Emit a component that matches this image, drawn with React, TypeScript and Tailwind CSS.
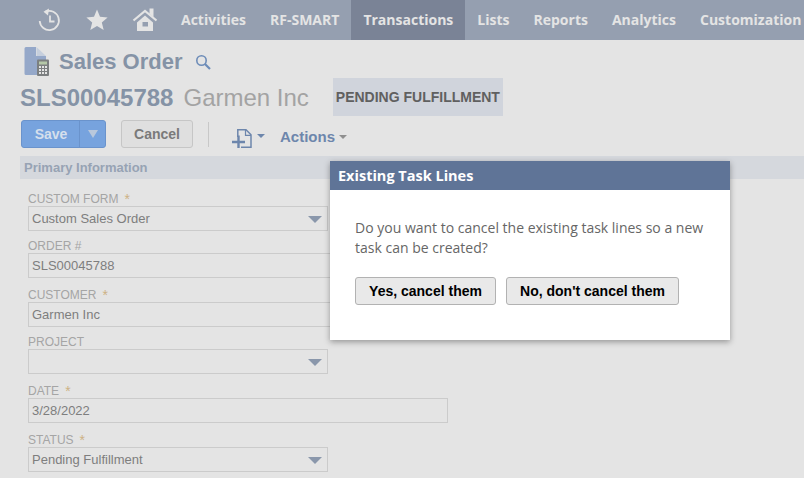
const sans = "font-['Liberation_Sans',Arial,sans-serif]";

const navItems = ['Activities', 'RF-SMART', 'Transactions', 'Lists', 'Reports', 'Analytics', 'Customization'];

const HistoryIcon = () => (
  <svg width="24" height="24" viewBox="0 0 24 24" fill="none" stroke="#e4e4e4" strokeWidth="1.800" className="shrink-0">
    <path d="M8.500 3.600A9.600 9.600 0 1 1 2.700 13" />
    <path d="M12 0.500 L6.500 3.800 L11 7.500" fill="#e4e4e4" stroke="none" />
    <path d="M13 7.500v6h4.500" />
  </svg>
);

const StarIcon = () => (
  <svg width="24" height="24" viewBox="0 0 24 24" fill="#e4e4e4" className="shrink-0">
    <path d="M12 1.500l3 7.300 7.600.6-5.800 5 1.900 7.600L12 18l-6.700 4 1.900-7.600-5.800-5 7.600-.6z" />
  </svg>
);

const HomeIcon = () => (
  <svg width="26" height="24" viewBox="0 0 26 24" className="shrink-0">
    <path d="M1.500 12.500L13 3l11.500 9.500" fill="none" stroke="#e4e4e4" strokeWidth="2.200" />
    <path d="M17.500 0.500h4v8.500l-4-3.300z" fill="#e4e4e4" />
    <path d="M5 14.500L13 7.500l8 7V23H5z" fill="#e4e4e4" />
    <rect x="10.500" y="14" width="5.500" height="4.500" fill="#959fb0" />
  </svg>
);

const RecordIcon = () => (
  <svg width="26" height="30" viewBox="0 0 26 30" className="shrink-0">
    <path d="M2 0h10v9h10v19H2a1.500 1.500 0 0 1-1.500-1.500v-25A1.500 1.500 0 0 1 2 0z" fill="#95a8c9" />
    <path d="M12.500 0L22 9h-9.500z" fill="#c6cfdd" />
    <rect x="13" y="12.500" width="12" height="16.500" rx="1" fill="#7c7f80" />
    <rect x="15" y="14.500" width="8" height="3" fill="#b5c8a8" />
    <path d="M15 19h2v2h-2zM18 19h2v2h-2zM21 19h2v2h-2zM15 22h2v2h-2zM18 22h2v2h-2zM21 22h2v2h-2zM15 25h2v2h-2zM18 25h2v2h-2zM21 25h2v2h-2z" fill="#e4e4e4" />
  </svg>
);

const SearchIcon = () => (
  <svg width="16" height="16" viewBox="0 0 16 16" fill="none" stroke="#6d8cb8" strokeWidth="1.600" className="shrink-0">
    <circle cx="6.500" cy="6.500" r="4.700" />
    <path d="M10 10l5 5" strokeWidth="2.200" />
  </svg>
);

const NewRecordIcon = () => (
  <svg width="20" height="19" viewBox="0 0 20 19" fill="none" stroke="#6d86ac" strokeWidth="1.500" className="shrink-0">
    <path d="M5.800 8V.8h8.200l5 5V18.200H9" />
    <path d="M13.500 1v5.300h5.500" strokeWidth="1.200" />
    <path d="M0 13h13M6.500 6.500v12.500" strokeWidth="2.400" />
  </svg>
);

const Caret = ({ className }: { className: string }) => (
  <span className={`inline-block w-0 h-0 border-x-[4px] border-x-transparent border-t-[4px] ${className}`} />
);

const SelectArrow = () => (
  <span className="ml-auto mr-[5px] mt-[1px] w-0 h-0 border-x-[7px] border-x-transparent border-t-[7px] border-t-[#8a97ab]" />
);

interface FieldProps {
  label: string;
  value?: string;
  required?: boolean;
  select?: boolean;
  tight?: boolean;
}

const Field = ({ label, value, required, select, tight }: FieldProps) => (
  <div className={tight ? 'mb-[6px]' : 'mb-[8px]'}>
    <div className="h-[16px] pt-[1px] flex items-center text-[12px] leading-none text-[#a5a5a5]">
      {label}
      {required && <span className="ml-[6px] mt-[1px] text-[14px] text-[#cdb285]">*</span>}
    </div>
    <div
      className={`h-[25px] flex items-center border border-[#cbcbcb] pl-[3px] text-[13px] text-[#7e7e7e] ${
        select ? 'w-[300px]' : 'w-[420px]'
      }`}
    >
      {value}
      {select && <SelectArrow />}
    </div>
  </div>
);

export default function App() {
  return (
    <div className={`relative w-[804px] h-[478px] overflow-hidden bg-[#e4e4e4] ${sans}`}>
      <nav className="h-[40px] flex items-center bg-[#959fb0] font-['Open_Sans',sans-serif] font-bold text-[14px] text-[#e4e4e4]">
        <div className="w-[169px] shrink-0 flex items-center pl-[37px] gap-[24px]">
          <HistoryIcon />
          <StarIcon />
          <span className="-ml-[1px]">
            <HomeIcon />
          </span>
        </div>
        {navItems.map((item) => (
          <div
            key={item}
            className={`h-full shrink-0 flex items-center px-3 pb-[1px] whitespace-nowrap ${item === 'Transactions' ? 'bg-[#7a8396]' : ''}`}
          >
            {item}
          </div>
        ))}
      </nav>

      <div className="flex items-center h-[38px] pl-[24px] pt-[5px]">
        <RecordIcon />
        <span className="ml-[9px] text-[22px] font-bold text-[#8593a6]">Sales Order</span>
        <span className="ml-[12px] mt-[1px]">
          <SearchIcon />
        </span>
      </div>

      <div className="flex items-center h-[38px] pl-[20px]">
        <span className="mt-[1px] text-[24px] font-bold text-[#8593a6]">SLS00045788</span>
        <span className="mt-[1px] ml-[10px] text-[24px] text-[#a3a3a3]">Garmen Inc</span>
        <div className="ml-[24px] h-full w-[170px] flex items-center justify-center bg-[#d0d4dc] text-[14px] font-bold text-[#606060]">
          PENDING FULFILLMENT
        </div>
      </div>

      <div className="flex items-center h-[28px] mt-[4px] pl-[21px]">
        <div className="w-[85px] h-full flex rounded-[3px] border border-[#6a93cc] bg-[#77a3de] text-[14px] font-bold text-[#d5dfec]">
          <div className="w-[58px] pl-[1px] flex items-center justify-center border-r border-[#6a93cc]">Save</div>
          <div className="flex-1 flex items-center justify-center">
            <span className="w-0 h-0 border-x-[5px] border-x-transparent border-t-[8px] border-t-[#b9c8dc]" />
          </div>
        </div>
        <div className="ml-[15px] w-[72px] h-full flex items-center justify-center rounded-[3px] border border-[#c6c6c6] bg-[#dfdfdf] text-[14px] font-bold text-[#7a7a7a]">
          Cancel
        </div>
        <div className="ml-[15px] w-px h-[25px] bg-[#c8c8c8]" />
        <div className="ml-[23px] mt-[8px]">
          <NewRecordIcon />
        </div>
        <Caret className="ml-[5px] mt-[4px] border-t-[#6d86ac]" />
        <span className="ml-[15px] mt-[6px] text-[15px] font-bold text-[#6d86ac]">Actions</span>
        <Caret className="ml-[4px] mt-[6px] border-t-[#8f8f8f]" />
      </div>

      <div className="ml-[20px] mt-[8px] h-[23px] flex items-center pl-[4px] bg-[#d5d8dd] text-[13px] font-bold text-[#97a3b4]">
        Primary Information
      </div>

      <div className="pl-[28px] pt-[11px]">
        <Field label="CUSTOM FORM" value="Custom Sales Order" required select tight />
        <Field label="ORDER #" value="SLS00045788" />
        <Field label="CUSTOMER" value="Garmen Inc" required tight />
        <Field label="PROJECT" select />
        <Field label="DATE" value="3/28/2022" required />
        <Field label="STATUS" value="Pending Fulfillment" required select />
      </div>

      <div className="absolute left-[330px] top-[161px] w-[400px] h-[179px] bg-white shadow-[0_2px_6px_rgba(0,0,0,0.35)]">
        <div className="h-[29px] flex items-center pl-[8px] bg-[#5f7497] font-['Open_Sans',sans-serif] text-[14.5px] font-bold text-white">
          Existing Task Lines
        </div>
        <p className="mt-[28px] mx-[25px] font-['Open_Sans',sans-serif] text-[14px] leading-[20px] text-[#666666]">
          Do you want to cancel the existing task lines so a new task can be created?
        </p>
        <div className="mt-[19px] ml-[25px] flex gap-[10px]">
          <button className="w-[141px] h-[28px] rounded-[3px] border border-[#b2b2b2] bg-[#e9e9e9] text-[14px] font-bold text-black">
            Yes, cancel them
          </button>
          <button className="w-[173px] h-[28px] rounded-[3px] border border-[#b2b2b2] bg-[#e9e9e9] text-[14px] font-bold text-black">
            No, don't cancel them
          </button>
        </div>
      </div>
    </div>
  );
}
